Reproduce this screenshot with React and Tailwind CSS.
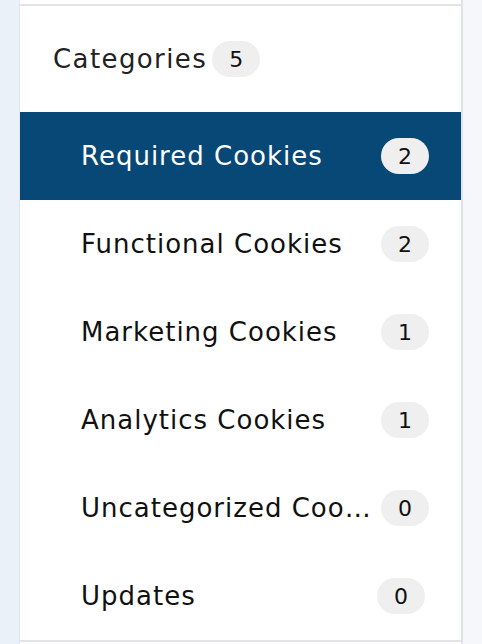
import React from "react";

const categories = [
  { name: "Required Cookies", count: 2, active: true },
  { name: "Functional Cookies", count: 2 },
  { name: "Marketing Cookies", count: 1 },
  { name: "Analytics Cookies", count: 1 },
  { name: "Uncategorized Cookies", count: 0 },
  { name: "Updates", count: 0, last: true },
];

export default function App() {
  return (
    <div
      className="flex h-[644px] w-[482px] overflow-hidden bg-white"
      style={{ fontFamily: '"DejaVu Sans", "Open Sans", sans-serif' }}
    >
      <div className="w-[20px] shrink-0 border-r border-[#dfe6ee] bg-[#ebf1f9]" />
      <div className="flex w-[443px] shrink-0 flex-col border-r-2 border-[#dfe3e8]">
        <div className="h-[4px] bg-white" />
        <div className="flex h-[108px] items-center border-t-2 border-[#e1e5ea] pl-[33px]">
          <span className="text-[26px] text-[#222] tracking-[1.4px]">Categories</span>
          <span className="ml-[5px] flex h-[36px] w-[48px] items-center justify-center rounded-full bg-[#efefef] text-[22px] text-[#111]">
            5
          </span>
        </div>
        {categories.map((c) => (
          <CategoryRow key={c.name} cat={c} />
        ))}
        <div className="flex-1 border-t-2 border-[#e1e5ea]" />
      </div>
      <div className="flex-1 bg-[#f5f7fa]" />
    </div>
  );
}

function CategoryRow({ cat }) {
  return (
    <div
      className={`flex h-[88px] shrink-0 items-center pl-[61px] ${
        cat.active ? "bg-[#084876] text-white" : "text-[#111]"
      } ${cat.last ? "pr-[36px]" : "pr-[32px]"}`}
    >
      <span className="min-w-0 flex-1 truncate pr-[4px] text-[26px] tracking-[1px]">
        {cat.name}
      </span>
      <span className="flex h-[36px] w-[48px] shrink-0 items-center justify-center rounded-full bg-[#efefef] text-[22px] text-[#111]">
        {cat.count}
      </span>
    </div>
  );
}
